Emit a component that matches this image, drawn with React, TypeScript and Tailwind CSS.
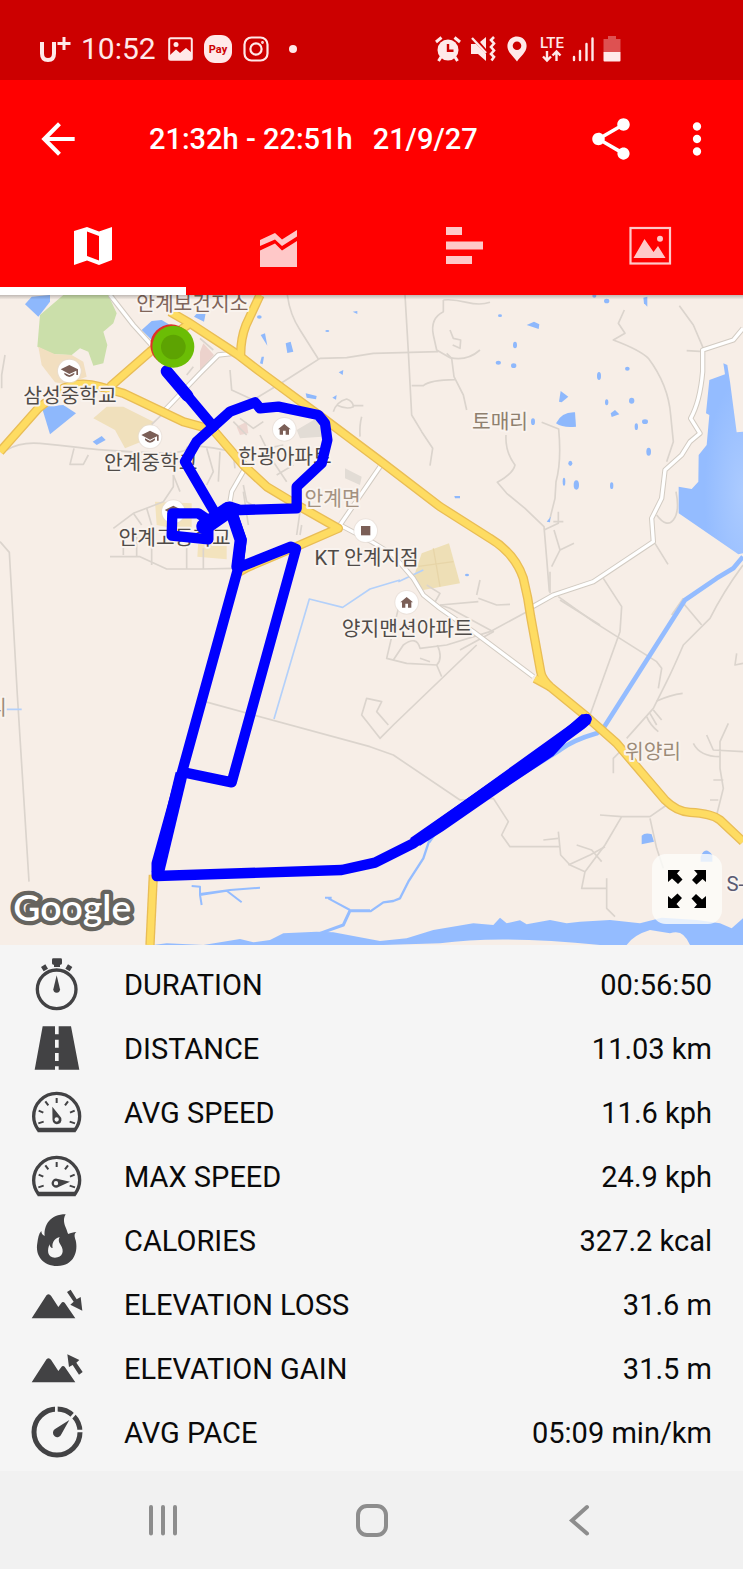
import type { ReactNode } from "react";
import { MdArrowBack, MdMoreVert, MdShare } from "react-icons/md";

/* ---------- status bar ---------- */

function StatusBar() {
  return (
    <div className="flex h-20 items-center justify-between bg-[#cc0000] pt-[18px] pr-[122px] pl-[39px] text-[#ffe9e9]">
      <div className="flex items-center">
        <svg viewBox="0 0 32 26" className="mr-[10px] h-[26px] w-8" fill="none" stroke="currentColor" aria-label="U+">
          <path d="M3 6V17.500Q3 24 9 24T15 17.500V6" strokeWidth="4" />
          <path d="M25 1V14M18.500 7.500H31.500" strokeWidth="3" />
        </svg>
        <span className="mr-3 text-[30px] leading-9">10:52</span>
        <svg viewBox="0 0 26 24" className="mr-[10px] h-6 w-[26px]" fill="none" aria-hidden="true">
          <rect x="1.200" y="1.200" width="22.600" height="21.600" rx="1.500" stroke="currentColor" strokeWidth="2" />
          <path d="M2 18L8 12.500L12 16L18 11L24 16V22H2Z" fill="currentColor" />
          <circle cx="8" cy="7.500" r="2.500" fill="currentColor" />
        </svg>
        <svg viewBox="0 0 28 28" className="mr-[11px] size-7" aria-hidden="true">
          <rect width="28" height="28" rx="11" fill="currentColor" />
          <text x="14" y="18" textAnchor="middle" fontSize="11" fontWeight="700" fill="#cc0000">
            Pay
          </text>
        </svg>
        <svg viewBox="0 0 26 26" className="mr-5 size-[26px]" fill="none" stroke="currentColor" strokeWidth="2.200" aria-hidden="true">
          <rect x="1.500" y="1.500" width="23" height="23" rx="7" />
          <circle cx="13" cy="13" r="5.600" />
          <circle cx="19.500" cy="6.500" r="0.800" strokeWidth="1.200" />
        </svg>
        <span className="size-2 rounded-full bg-[#ffe9e9]" />
      </div>
      <div className="flex items-center">
        <svg viewBox="0 0 26 26" className="mr-[9px] size-[26px]" fill="none" stroke="currentColor" aria-hidden="true">
          <circle cx="13" cy="14" r="10.500" fill="currentColor" stroke="none" />
          <path d="M1 6L6.500 1.500M25 6L19.500 1.500" strokeWidth="3" />
          <path d="M6 21L3.500 25M20 21L22.500 25" strokeWidth="3" />
          <path d="M13 8V14.800H18.500" stroke="#cc0000" strokeWidth="2.400" />
        </svg>
        <svg viewBox="0 0 27 26" className="mr-[10px] h-[26px] w-[27px]" fill="currentColor" aria-hidden="true">
          <path d="M1 8H6L16 18V25L8 18H1Z" />
          <path d="M10 6L16 1V13Z" />
          <path d="M2 2L16 17" stroke="currentColor" strokeWidth="2.400" />
          <path d="M24 1L21 4L24 7.500L21 11L24 14.500L21 18L24 21L21.500 24.500" fill="none" stroke="currentColor" strokeWidth="2.600" />
        </svg>
        <svg viewBox="0 0 20 26" className="mr-3 h-[26px] w-5" aria-hidden="true">
          <path fillRule="evenodd" fill="currentColor" d="M10 .5C4.500 .5 .4 4.700 .4 10C.4 16.500 6.500 20 10 25.500C13.500 20 19.600 16.500 19.600 10C19.600 4.700 15.500 .5 10 .5ZM10 5.500A4.300 4.300 0 1 1 10 14.100A4.300 4.300 0 1 1 10 5.500Z" />
        </svg>
        <svg viewBox="0 0 26 28" className="mr-[7px] h-7 w-[26px]" fill="none" stroke="currentColor" aria-label="LTE">
          <text x="13" y="12.500" textAnchor="middle" fontSize="15" fontWeight="500" fill="currentColor" stroke="none">
            LTE
          </text>
          <path d="M8 16V25M4 21.500L8 25.500L12 21.500M17.500 26V17M13.500 20.500L17.500 16.500L21.500 20.500" strokeWidth="2.400" />
        </svg>
        <svg viewBox="0 0 22 26" className="mr-[9px] h-[26px] w-[22px]" stroke="currentColor" strokeWidth="2.400" strokeLinecap="round" aria-hidden="true">
          <path d="M2 21V24M8 15V24M14.500 8V24M20.500 2.500V24" />
        </svg>
        <svg viewBox="0 0 18 26" className="h-[26px] w-[18px]" fill="currentColor" aria-hidden="true">
          <path d="M5 0H13V3H17.500V16H.5V3H5Z" opacity="0.350" />
          <path d="M.5 16H17.500V24.500Q17.500 25.500 16.500 25.500H1.500Q.5 25.500 .5 24.500Z" />
        </svg>
      </div>
    </div>
  );
}

/* ---------- header ---------- */

function Toolbar() {
  return (
    <header className="flex h-[117px] items-center pr-[21px] pl-[33px] text-white">
      <button type="button" aria-label="Back">
        <MdArrowBack size={50} />
      </button>
      <h1 className="ml-[66px] flex flex-1 gap-5 text-[29px] leading-9 font-medium whitespace-nowrap">
        <span>21:32h - 22:51h</span>
        <span>21/9/27</span>
      </h1>
      <button type="button" aria-label="Share" className="mr-9">
        <MdShare size={50} />
      </button>
      <button type="button" aria-label="More options">
        <MdMoreVert size={50} />
      </button>
    </header>
  );
}

const tabs: { name: string; icon: ReactNode }[] = [
  {
    name: "Map",
    icon: (
      <path
        fillRule="evenodd"
        d="M6 10L19 6L31 10.500L44 6V39L31 44L19 39.500L6 44ZM19 10.500V35L31 39.500V15Z"
      />
    ),
  },
  {
    name: "Charts",
    icon: <path d="M6 19L21 12L28 18.500L43 9V15.500L28 25L21 18.500L6 25ZM6 29.500L21 22.500L28 29.500L43 20V46H6Z" />,
  },
  { name: "Laps", icon: <path d="M7 6H23V14H7ZM7 20.500H44V28.500H7ZM7 35H33V43H7Z" /> },
  {
    name: "Photos",
    icon: (
      <>
        <rect x="5.500" y="7" width="39.500" height="35.500" fill="none" stroke="currentColor" strokeWidth="2.200" />
        <path d="M8.500 37L19.500 18L28.500 31L33 25L40.500 37Z" />
        <circle cx="35" cy="17.700" r="3" />
      </>
    ),
  },
];

function Tabs() {
  return (
    <div role="tablist" className="grid h-[98px] grid-cols-4">
      {tabs.map((tab, i) => (
        <button
          key={tab.name}
          type="button"
          role="tab"
          aria-label={tab.name}
          aria-selected={i === 0}
          className={
            i === 0
              ? "flex items-center justify-center border-y-8 border-t-transparent border-b-white text-white"
              : "flex items-center justify-center border-y-8 border-transparent text-[#ffc8c8]"
          }
        >
          <svg viewBox="0 0 50 50" className="size-[50px]" fill="currentColor" aria-hidden="true">
            {tab.icon}
          </svg>
        </button>
      ))}
    </div>
  );
}

/* ---------- map ---------- */

const minorRoads = [
  // north-west
  "M20 465Q60 440 120 445T240 458T430 472T560 460T700 470",
  "M222 460L210 508L250 508L265 480",
  "M15 180L5 240L5 280",
  "M0 740L28 772L33 860L52 1200L87 1760",
  "M520 540V575L490 620L400 655L340 700M400 655L425 690M440 640L455 690",
  "M330 785H420L500 822H610L700 820M370 720V780M410 710V785M455 730V810M560 750V820M610 760V822",
  "M455 388L500 345M600 130L640 165M560 240L580 215",
  "M690 225L695 285L760 315L850 260L910 222L960 190L1040 188L1120 175L1315 170",
  "M862 0Q870 60 900 105L955 192",
  "M620 460L640 530L620 570M660 470L655 560M700 480L705 520M520 540L540 590",
  "M720 370L760 400L790 380M740 470L820 500L860 560M780 420L800 460L850 450M830 540L880 510",
  "M730 570L740 620L790 650M900 650L890 720M900 720L905 690",
  "M700 380L740 420M730 590L745 690",
  // north
  "M1215 0L1225 170L1235 360L1265 410L1298 460L1290 512",
  "M1330 15Q1360 12 1400 22T1470 22M1330 15V50Q1290 70 1300 120L1310 165L1350 188Q1400 200 1440 165M1355 190L1362 245L1390 300L1400 345M1235 272H1270Q1290 255 1365 254",
  "M1350 105L1360 130L1382 135L1380 160L1358 150M1355 190L1340 175",
  "M1000 350Q1010 320 1040 312Q1060 320 1060 335Q1040 345 1010 330M1060 332H1090M1085 365Q1078 390 1080 425",
  // north-east
  "M1873 45L1855 85L1875 115L1840 135Q1920 165 1945 190Q2005 270 2012 360L2020 440L2000 500",
  "M2038 32L2080 90L2110 160M2060 167L2112 170",
  "M1625 382L1676 402Q1685 500 1668 560L1665 610L1650 670M1518 420Q1515 470 1545 510Q1540 535 1492 562L1520 595L1575 640L1632 695L1640 790L1648 890",
  "M1675 650V685L1632 705M1690 680H1660M1662 705L1680 765L1655 815M1680 765L1722 745",
  "M1970 660Q2000 700 2020 675T2028 590M1965 745L2004 808",
  "M1810 850L1865 935L1860 1010L1770 1260M1675 905L1780 980L1970 1100L1985 1120L1975 1180",
  "M2229 810Q2170 890 2130 970L2050 1050Q2020 1120 2000 1160L1960 1240L1880 1330",
  "M2050 925L2105 990M2015 960L2050 910M1970 1218Q2010 1200 2048 1195M1960 1245L1985 1275M1950 1255L1970 1290M1940 1265Q1950 1290 1975 1310",
  "M2229 1105L2205 1110L2210 1075",
  // centre
  "M1195 940L1160 1090L1220 1105L1310 1110Q1330 1090 1312 1050M1280 870L1320 895L1300 930M1320 930L1435 920M1430 900L1440 855",
  "M1435 910L1490 930L1530 928M1320 930L1350 940L1480 1010L1380 1065",
  "M1180 1095L1210 1050Q1250 1020 1260 1060L1340 1050L1470 1010L1600 940M1260 1090L1290 1100M1310 1110L1325 1145",
  "M1430 1050L1180 1290L1140 1330L1085 1260L1100 1210L1145 1220L1130 1250L1165 1290",
  "M1650 830V895M1680 915L1800 990",
  "M615 1220L1110 1355L1180 1380L1380 1515L1480 1510L1525 1580L1505 1620L1530 1655H1680",
  // south-east
  "M1675 1610L1682 1680L1710 1710L1755 1730L1745 1780H1820M1755 1730L1815 1650L1865 1565H1950L2000 1530M1800 1560L1865 1565",
  "M1730 1650L1775 1665L1805 1700M1630 1635L1675 1630M1815 1655L1770 1680L1705 1710M1820 1750V1840L1845 1865",
  "M1950 1570L1970 1660L1990 1720",
  "M2080 1345Q2100 1385 2160 1385M2120 1320L2140 1365L2229 1370M2185 1285L2160 1340V1420L2170 1480L2150 1560M2140 1455H2170M2130 1515H2155",
  "M1840 1435V1390L1870 1360",
];

const whiteRoads = [
  "M330 0L400 90L450 145L470 175",
  "M495 345L600 235L655 180L700 175",
  "M735 520L695 590L690 620",
  "M1140 515L1020 690L1115 740L1180 780L1240 850L1270 900L1320 940L1420 1010L1600 1145",
  "M1598 935L1660 900L1780 860L1960 740L1955 670L1985 610L1995 525L2045 480L2070 440L2100 415L2072 370Q2100 320 2108 230V165L2200 135L2229 100",
];

const highways = [
  "M510 50L570 85L715 180L780 230L970 370L1150 505L1320 635L1470 730Q1545 775 1570 850Q1585 910 1592 965L1622 1130Q1625 1150 1650 1175L1760 1265L1850 1345L1910 1415L1995 1515Q2030 1550 2070 1552Q2135 1555 2160 1575L2229 1640",
  "M780 0L738 90Q722 130 722 180",
  "M0 470L115 340L190 280Q240 258 300 275L370 295L550 380L640 405L730 510L800 575L900 635L1015 700L900 750L740 818L716 832",
  "M460 1740L450 1950",
  "M330 275L450 170L570 85",
  "M1605 1150L1650 1175",
];

const ponds = [
  "M75 28L95 5L150 0V20L115 65Z",
  "M425 105L455 78L485 75L510 90V150L480 160Z",
  "M582 65L595 50L617 55L612 80Z",
  "M125 335L190 330L228 355L150 418Z",
  "M278 440L305 423L317 435L290 450Z",
  "M1580 90L1602 80L1618 88L1616 102Z",
  "M1677 320L1682 288L1705 305L1685 322Z",
  "M1668 385Q1685 350 1725 352L1728 395Q1690 400 1668 385Z",
  "M782 120L795 115L802 152Z",
  "M857 145L872 140L880 170L862 174Z",
  "M780 205L785 185L792 185L788 208Z",
  "M917 295L950 303L948 313L920 308Z",
  "M997 308L1010 300L1008 314Z",
  "M1016 232L1030 225L1028 240Z",
  "M1058 50L1072 48L1072 57Z",
  "M1363 603H1380V610H1365Z",
  "M1925 1622Q1935 1612 1955 1618L1962 1640L1925 1648Z",
  "M2102 1700V1685Q2115 1650 2137 1680V1700Z",
  "M1640 680L1652 665L1650 682Z",
  "M1832 355L1845 345L1858 358L1835 366Z",
  "M1930 8L1942 5V35L1932 25Z",
];

const smallPonds = [
  [1545, 150, 6, 10], [1541, 212, 8, 7], [1495, 203, 8, 6], [1797, 243, 6, 12], [1882, 221, 7, 6],
  [1820, 322, 5, 9], [1895, 317, 8, 9], [1935, 380, 9, 7], [1909, 395, 5, 10], [1946, 470, 7, 12],
  [1599, 380, 6, 10], [1711, 505, 6, 8], [1692, 560, 4, 12], [1729, 570, 8, 14], [1835, 572, 5, 10],
  [1820, 18, 8, 7], [1500, 62, 6, 4], [778, 66, 7, 5], [982, 108, 6, 3], [1783, 3, 6, 5], [1401, 840, 6, 4],
];

function Poi({ x, y, kind }: { x: number; y: number; kind: "school" | "home" | "square" }) {
  return (
    <g transform={`translate(${x} ${y})`}>
      <circle r="37" fill="#e4dcd5" opacity="0.600" />
      <circle r="34" fill="#fff" />
      <g fill="#7b5f57">
        {kind === "school" && (
          <path d="M-26 -5L0 -18L26 -5V12H21V-1L0 9ZM-15 5L0 13L15 5V10Q0 26 -15 10Z" />
        )}
        {kind === "home" && <path d="M-19 0L0 -16L19 0H14V16H4V4H-4V16H-14V0Z" />}
        {kind === "square" && <rect x="-14" y="-14" width="28" height="28" />}
      </g>
    </g>
  );
}

const labels = [
  { text: "안계보건지소", x: 577, y: 47, fill: "#80655a" },
  { text: "삼성중학교", x: 210, y: 325, fill: "#504b48" },
  { text: "안계중학교", x: 452, y: 525, fill: "#504b48" },
  { text: "안계고등학교", x: 524, y: 750, fill: "#504b48" },
  { text: "한광아파트", x: 855, y: 506, fill: "#504b48" },
  { text: "안계면", x: 998, y: 634, fill: "#a39180" },
  { text: "KT 안계지점", x: 1100, y: 810, fill: "#504b48" },
  { text: "토매리", x: 1500, y: 402, fill: "#8f806f" },
  { text: "양지맨션아파트", x: 1222, y: 1023, fill: "#504b48" },
  { text: "위양리", x: 1959, y: 1393, fill: "#9c8b78" },
  { text: "리", x: -8, y: 1261, fill: "#9c8b78" },
  { text: "S-", x: 2206, y: 1789, fill: "#5a5a72" },
];

function RouteMap() {
  return (
    <section aria-label="Route map" className="relative">
      <svg viewBox="0 0 2229 1950" className="block h-auto w-full" fill="none" strokeLinejoin="round">
        <defs>
          <radialGradient id="lake" cx="1" cy="0.680" r="0.600">
            <stop offset="0" stopColor="#accbff" />
            <stop offset="1" stopColor="#94bcff" />
          </radialGradient>
          <linearGradient id="shade" x1="0" y1="0" x2="0" y2="1">
            <stop offset="0" stopColor="#000" stopOpacity="0.220" />
            <stop offset="1" stopColor="#000" stopOpacity="0" />
          </linearGradient>
        </defs>
        <rect width="2229" height="1950" fill="#f7eee7" />

        {/* parks, school grounds, built-up blocks */}
        <path d="M190 0H325L350 55L340 85L310 110L322 150L310 205L280 212L265 170L240 160L215 180L160 178L112 155L120 60Z" fill="#cbdfaa" />
        <path d="M115 155L165 178L215 180L250 200L260 245L200 268L165 262L125 210Z" fill="#f2dfc0" />
        <path d="M280 370L320 335L370 335L460 380L450 430L375 460L345 405Z" fill="#f0e0bc" />
        <path d="M465 620L575 625V710L470 690ZM595 735L680 740V793L592 785Z" fill="#f3e3bd" />
        <path d="M1265 775L1347 745L1380 865L1270 885L1240 850Z" fill="#eedfb6" />
        <path d="M1300 760L1320 875M1250 815L1360 800" stroke="#e7d5a8" strokeWidth="4" />
        <path d="M600 170L610 145L642 180L600 225Z" fill="#ecd2cc" />
        <path d="M710 395L740 380L745 415L720 420Z" fill="#edd6d0" />
        <path d="M890 405L950 370L970 380L965 425L900 430ZM1035 520L1085 545L1080 570L1035 550Z" fill="#e2dcd5" />

        {/* minor roads */}
        <g stroke="#dbd4cd" strokeWidth="5">
          {minorRoads.map((d) => (
            <path key={d} d={d} />
          ))}
        </g>

        {/* water */}
        <g fill="#8eb8fc">
          {ponds.map((d) => (
            <path key={d} d={d} />
          ))}
          {smallPonds.map(([x, y, rx, ry]) => (
            <ellipse key={`${x}-${y}`} cx={x} cy={y} rx={rx} ry={ry} />
          ))}
        </g>
        <path
          d="M2128 255L2175 238L2170 205L2182 210L2190 260L2210 412L2229 410V775L2215 778L2036 655V575L2075 582L2095 560L2096 480L2120 450L2128 360L2118 355Z"
          fill="url(#lake)"
        />
        <g stroke="#94bcff">
          <path d="M2229 785L2200 820L2150 850L2055 915L1810 1300L1790 1315Q1720 1335 1680 1365L1320 1590L1285 1640" strokeWidth="14" />
          <path d="M1290 1630L1270 1690L1225 1760L1200 1810L1180 1818L1150 1822L1110 1850" strokeWidth="7" />
          <path d="M1110 1847H1050L1030 1890L960 1915" strokeWidth="9" />
          <path d="M1050 1845L985 1810M975 1808H995M575 1773L600 1775V1800L680 1787L725 1822M600 1800L605 1830M600 1797L690 1785L780 1778" strokeWidth="6" />
          <path d="M1200 855L1110 882L1028 937L928 912L822 1272M1270 825L1195 860M20 1243H65" stroke="#b3d0fa" strokeWidth="5" />
        </g>
        <path
          d="M460 1950L500 1945L610 1950L670 1940L720 1932L760 1942L810 1935L850 1915L950 1910L1000 1912L1140 1938L1220 1930L1300 1905L1420 1885L1480 1890L1500 1868L1520 1885L1560 1876L1580 1888L1650 1875L1700 1885L1740 1880L1830 1875L1920 1885L1985 1868L2090 1875L2160 1885L2195 1900L2229 1870V1950H2070Q2050 1900 2010 1915L1950 1905Q1900 1920 1880 1950H1800Q1500 1920 1320 1945L1150 1950Z"
          fill="#94bcff"
        />

        {/* local and trunk roads */}
        <g stroke="#d2cbc2" strokeWidth="16">
          {whiteRoads.map((d) => (
            <path key={d} d={d} />
          ))}
        </g>
        <g stroke="#ffffff" strokeWidth="10">
          {whiteRoads.map((d) => (
            <path key={d} d={d} />
          ))}
        </g>
        <g stroke="#e9bd56" strokeWidth="28">
          {highways.map((d) => (
            <path key={d} d={d} />
          ))}
        </g>
        <g stroke="#fedc62" strokeWidth="20">
          {highways.map((d) => (
            <path key={d} d={d} />
          ))}
        </g>

        <Poi x={208} y={228} kind="school" />
        <Poi x={450} y={425} kind="school" />
        <Poi x={520} y={650} kind="school" />
        <Poi x={853} y={403} kind="home" />
        <Poi x={1097} y={707} kind="square" />
        <Poi x={1220} y={922} kind="home" />

        <g
          fontFamily="Roboto, 'Noto Sans CJK KR', sans-serif"
          fontSize="61"
          textAnchor="middle"
          stroke="#f9f3ee"
          strokeWidth="12"
          style={{ paintOrder: "stroke" }}
        >
          {labels.map((l) => (
            <text key={l.text} x={l.x} y={l.y} fill={l.fill}>
              {l.text}
            </text>
          ))}
        </g>

        {/* recorded track */}
        <g stroke="#0000ff" strokeWidth="31" strokeLinecap="round">
          <path d="M500 228L640 395L690 350L765 322L780 340L835 335L955 360L975 385L982 435L965 505L890 575V640L720 645L690 635L725 735L715 818L873 755L888 762L695 1462L555 1433" />
          <path d="M640 395L590 440L555 500L640 645M715 818L545 1435L470 1705V1743L1025 1725L1125 1703L1240 1645L1760 1272" />
          <path d="M625 675L595 655H517L515 722L625 733V675" />
          <path d="M500 229L562 302" strokeWidth="36" />
        </g>
        <g stroke="#0000ff" strokeLinecap="round">
          <path d="M614 694L685 645" strokeWidth="50" />
          <path d="M690 640L722 735L712 815" strokeWidth="36" />
          <path d="M545 1435L473 1735" strokeWidth="37" strokeLinecap="butt" />
        </g>
        <path d="M1230 1630L1560 1400L1680 1315L1745 1258H1768L1772 1285L1755 1300L1700 1340L1660 1383L1500 1490L1330 1608L1260 1652Z" fill="#0000ff" />

        <circle cx="513" cy="150" r="62" fill="#e0302a" />
        <circle cx="520" cy="155" r="63" fill="#6bbd05" />
        <circle cx="520" cy="156" r="37" fill="#5da302" />

        <text
          x="40"
          y="1879"
          fontFamily="Lato, sans-serif"
          fontSize="112"
          fontWeight="600"
          fill="#fff"
          stroke="#66645f"
          strokeWidth="26"
          style={{ paintOrder: "stroke" }}
        >
          Google
        </text>
        <rect width="2229" height="14" fill="url(#shade)" />
      </svg>
      <button
        type="button"
        aria-label="Full screen"
        className="absolute right-[21px] bottom-[21px] flex size-[70px] items-center justify-center rounded-[14px] bg-[#fdfcfa]/80"
      >
        <svg viewBox="0 0 38 38" className="size-[38px]" fill="#000" aria-hidden="true">
          <g id="corner">
            <path d="M0 0H12L9 3.500L14.500 9.500L10 14L4 8.500L0 12Z" />
          </g>
          <use href="#corner" transform="rotate(90 19 19)" />
          <use href="#corner" transform="rotate(180 19 19)" />
          <use href="#corner" transform="rotate(270 19 19)" />
        </svg>
      </button>
    </section>
  );
}

/* ---------- statistics ---------- */

function Gauge({ children }: { children: ReactNode }) {
  return (
    <>
      <path d="M22 129Q8 110 8 88A69 69 0 0 1 146 88Q146 110 132 129Z" fill="none" stroke="currentColor" strokeWidth="10" strokeLinejoin="round" />
      <path d="M20 122H134V136H20Z" />
      <path
        d="M22 109L38 104M23 71L37 77M43 43L52 55M77 33V48M111 43L102 55M131 71L117 77M132 109L116 104"
        fill="none"
        stroke="currentColor"
        strokeWidth="6"
      />
      {children}
    </>
  );
}

const mountains = <path d="M2 118L47 48Q54 42 60 50L82 84L93 70Q97 67 101 71L133 118Z" />;

const stats: { label: string; value: string; icon: ReactNode }[] = [
  {
    label: "DURATION",
    value: "00:56:50",
    icon: (
      <>
        <circle cx="77" cy="91" r="58" fill="none" stroke="currentColor" strokeWidth="10" />
        <path d="M67 -2H89Q93 -2 93 2V13Q93 17 89 17H87V24H69V17H67Q63 17 63 13V2Q63 -2 67 -2Z" />
        <path d="M30 24L43 16L51 29L38 37ZM124 24L111 16L103 29L116 37Z" />
        <path d="M77 49L87 91A10 10 0 1 1 67 91Z" />
      </>
    ),
  },
  {
    label: "DISTANCE",
    value: "11.03 km",
    icon: (
      <path
        fillRule="evenodd"
        d="M35 10H120L145 140H11ZM72 10V34H83V10ZM72 50V74H83V50ZM72 90V114H83V90ZM72 130V140H83V130Z"
      />
    ),
  },
  {
    label: "AVG SPEED",
    value: "11.6 kph",
    icon: (
      <Gauge>
        <path fillRule="evenodd" d="M64 59L87 88A13.500 13.500 0 1 1 64.500 98ZM77 91A6.500 6.500 0 1 0 77 104A6.500 6.500 0 1 0 77 91Z" />
      </Gauge>
    ),
  },
  {
    label: "MAX SPEED",
    value: "24.9 kph",
    icon: (
      <Gauge>
        <path fillRule="evenodd" d="M117 92L81 84A13.500 13.500 0 1 0 84 107ZM75 90A6.500 6.500 0 1 0 75 103A6.500 6.500 0 1 0 75 90Z" />
      </Gauge>
    ),
  },
  {
    label: "CALORIES",
    value: "327.2 kcal",
    icon: (
      <path
        fillRule="evenodd"
        d="M104 -2C94 14 101 30 106 42C109 50 110 55 112 57C119 54 127 51 136 51C129 56 130 64 134 76C142 108 130 153 79 153C36 153 12 122 19 84C21 70 23 56 31 48C31 55 34 60 41 63C38 30 58 -2 104 -2ZM86 66C68 71 62 86 65 99C59 99 56 94 56 88C48 104 48 128 72 128C95 128 101 108 89 90C84 82 81 76 86 66Z"
      />
    ),
  },
  {
    label: "ELEVATION LOSS",
    value: "31.6 m",
    icon: (
      <>
        {mountains}
        <path d="M108 39L119 32L137 61L149 54L154 95L118 77L128 68Z" />
      </>
    ),
  },
  {
    label: "ELEVATION GAIN",
    value: "31.5 m",
    icon: (
      <>
        {mountains}
        <path d="M109 34L145 51L136 59L155 87L144 95L125 66L114 72Z" />
      </>
    ),
  },
  {
    label: "AVG PACE",
    value: "05:09 min/km",
    icon: (
      <>
        <circle cx="78" cy="75" r="69" fill="none" stroke="currentColor" strokeWidth="15" />
        <path d="M76 -4V20M119 34L137 14M134 72H158" stroke="#f5f5f5" strokeWidth="8" />
        <path d="M115 39L91 82A13 13 0 1 1 71 67Z" />
      </>
    ),
  },
];

function Stats() {
  return (
    <section className="flex-1 bg-[#f5f5f5] px-[31px] pt-2 pb-[6px] text-[#0a0a0a]">
      <table className="w-full border-collapse text-[29px] leading-9">
        <tbody>
          {stats.map((s) => (
            <tr key={s.label} className="h-16">
              <td className="w-[93px] p-0 text-[#424244]">
                <svg viewBox="0 0 156 156" className="block size-[52px] overflow-visible" fill="currentColor" aria-hidden="true">
                  {s.icon}
                </svg>
              </td>
              <th scope="row" className="p-0 text-left font-normal">
                {s.label}
              </th>
              <td className="p-0 text-right">{s.value}</td>
            </tr>
          ))}
        </tbody>
      </table>
    </section>
  );
}

/* ---------- system navigation ---------- */

function NavBar() {
  return (
    <nav aria-label="System" className="flex h-[98px] items-center justify-between bg-[#f1f1f1] px-[138px] text-[#8d8d8d]">
      <button type="button" aria-label="Recent apps">
        <svg viewBox="0 0 50 50" className="size-[50px]" fill="none" stroke="currentColor" strokeWidth="4" strokeLinecap="round">
          <path d="M13 12V38.500M25 12V38.500M37 12V38.500" />
        </svg>
      </button>
      <button type="button" aria-label="Home">
        <svg viewBox="0 0 50 50" className="size-[50px]" fill="none" stroke="currentColor" strokeWidth="4">
          <rect x="11" y="11" width="28" height="29" rx="9" />
        </svg>
      </button>
      <button type="button" aria-label="Back">
        <svg viewBox="0 0 50 50" className="size-[50px]" fill="none" stroke="currentColor" strokeWidth="4" strokeLinecap="round">
          <path d="M32 12L17 25.500L32 38.500" />
        </svg>
      </button>
    </nav>
  );
}

export default function App() {
  return (
    <div className="flex min-h-screen flex-col bg-[#f5f5f5] font-[Roboto,'Noto_Sans_CJK_KR',sans-serif]">
      <StatusBar />
      <div className="bg-[#ff0000]">
        <Toolbar />
        <Tabs />
      </div>
      <RouteMap />
      <Stats />
      <NavBar />
    </div>
  );
}
